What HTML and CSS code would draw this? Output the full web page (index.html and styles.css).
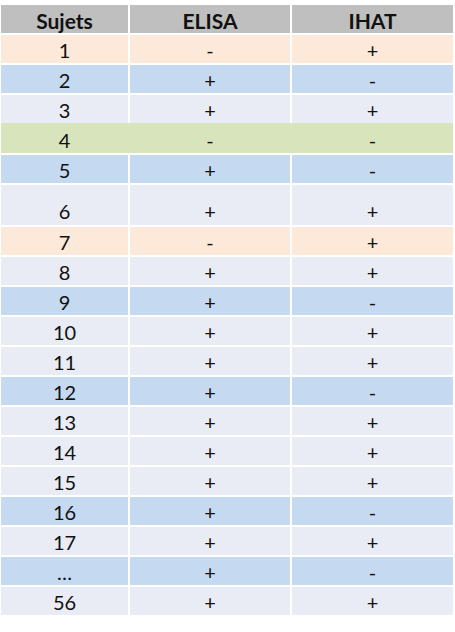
FILE: index.html
```html
<!DOCTYPE html>
<html lang="fr">
<head>
<meta charset="utf-8">
<title>Sujets ELISA IHAT</title>
<link rel="stylesheet" href="styles.css">
</head>
<body>
<div class="table">
  <div class="row head"><div class="cell">Sujets</div><div class="cell">ELISA</div><div class="cell">IHAT</div></div>
  <div class="row orange"><div class="cell">1</div><div class="cell">-</div><div class="cell">+</div></div>
  <div class="row blue"><div class="cell">2</div><div class="cell">+</div><div class="cell">-</div></div>
  <div class="row light"><div class="cell">3</div><div class="cell">+</div><div class="cell">+</div></div>
  <div class="row green"><div class="cell">4</div><div class="cell">-</div><div class="cell">-</div></div>
  <div class="row blue"><div class="cell">5</div><div class="cell">+</div><div class="cell">-</div></div>
  <div class="row light tall"><div class="cell">6</div><div class="cell">+</div><div class="cell">+</div></div>
  <div class="row orange"><div class="cell">7</div><div class="cell">-</div><div class="cell">+</div></div>
  <div class="row light"><div class="cell">8</div><div class="cell">+</div><div class="cell">+</div></div>
  <div class="row blue"><div class="cell">9</div><div class="cell">+</div><div class="cell">-</div></div>
  <div class="row light"><div class="cell">10</div><div class="cell">+</div><div class="cell">+</div></div>
  <div class="row light"><div class="cell">11</div><div class="cell">+</div><div class="cell">+</div></div>
  <div class="row blue"><div class="cell">12</div><div class="cell">+</div><div class="cell">-</div></div>
  <div class="row light"><div class="cell">13</div><div class="cell">+</div><div class="cell">+</div></div>
  <div class="row light"><div class="cell">14</div><div class="cell">+</div><div class="cell">+</div></div>
  <div class="row light"><div class="cell">15</div><div class="cell">+</div><div class="cell">+</div></div>
  <div class="row blue"><div class="cell">16</div><div class="cell">+</div><div class="cell">-</div></div>
  <div class="row light"><div class="cell">17</div><div class="cell">+</div><div class="cell">+</div></div>
  <div class="row blue"><div class="cell">…</div><div class="cell">+</div><div class="cell">-</div></div>
  <div class="row light"><div class="cell">56</div><div class="cell">+</div><div class="cell">+</div></div>
</div>
</body>
</html>
```
FILE: styles.css
```css
html, body {
  margin: 0;
  padding: 0;
  background: #ffffff;
}
body {
  font-family: "Lato", "Open Sans", sans-serif;
  font-size: 20px;
  color: #111111;
}
.table {
  display: flex;
  flex-direction: column;
  gap: 2px;
  padding: 5px 0 0 1px;
  width: 452px;
}
.row {
  display: grid;
  grid-template-columns: 127px 160px 161px;
  column-gap: 2px;
  height: 28px;
}
.cell {
  display: flex;
  align-items: center;
  justify-content: center;
  padding-top: 2px;
  box-sizing: border-box;
  line-height: 1;
}
.head .cell {
  background: #bfbfbf;
  font-weight: 700;
  font-size: 21px;
  padding-top: 2px;
}
.orange .cell { background: #fde9d9; }
.blue .cell { background: #c5d9f1; }
.light .cell { background: #e9ecf4; }
.green {
  background: #d8e4bc;
  margin: -2px 0 0;
  height: 30px;
}
.green .cell { padding-top: 4px; }
.tall { height: 40px; }
.tall .cell {
  align-items: flex-end;
  padding-top: 0;
  padding-bottom: 4px;
}
```
